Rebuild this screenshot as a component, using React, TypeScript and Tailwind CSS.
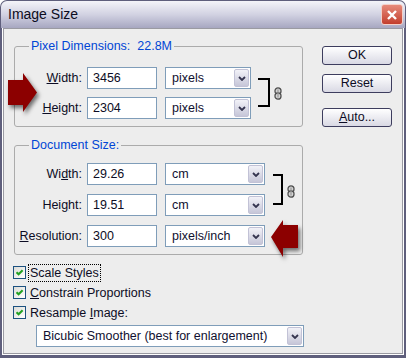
import React from "react";

const Chevron = () => (
  <svg width="8" height="5" viewBox="0 0 8 5">
    <path d="M1 1l3 3 3-3" stroke="#34344f" strokeWidth="1.8" fill="none" />
  </svg>
);

const Chain = () => (
  <svg width="8" height="13" viewBox="0 0 8 13">
    <rect x="1" y="0.8" width="6" height="6.4" rx="3" fill="#d4d4d4" stroke="#505050" strokeWidth="1.3" />
    <rect x="1" y="5.8" width="6" height="6.4" rx="3" fill="#d4d4d4" stroke="#505050" strokeWidth="1.3" />
    <path d="M4 2.5v8" stroke="#8a8a8a" strokeWidth="1" />
  </svg>
);

function Select({ value, className }: { value: string; className: string }) {
  return (
    <div className={`flex h-[22px] items-center border border-[#7f9db9] bg-white ${className}`}>
      <span className="flex-1 pl-[6px] text-[#101030]">{value}</span>
      <div className="m-[1px] flex h-[18px] w-[15px] items-center justify-center rounded-[2px] border border-[#c2c2d6] bg-gradient-to-b from-[#f2f2f8] to-[#c6c6d8]">
        <Chevron />
      </div>
    </div>
  );
}

function Field({ value }: { value: string }) {
  return (
    <div className="ml-[5px] flex h-[22px] w-[70px] items-center border border-[#7f9db9] bg-white pl-[5px]">
      {value}
    </div>
  );
}

function Row({ label, value, unit, selectClass }: { label: React.ReactNode; value: string; unit: string; selectClass: string }) {
  return (
    <div className="flex items-center">
      <div className="w-[67px] text-right">{label}</div>
      <Field value={value} />
      <Select value={unit} className={selectClass} />
    </div>
  );
}

function Check({ children, focus }: { children: React.ReactNode; focus?: boolean }) {
  return (
    <div className="flex h-[13px] items-center">
      <div className="flex h-[13px] w-[13px] items-center justify-center border border-[#1c5180] bg-gradient-to-br from-[#dcdcd7] to-white">
        <svg width="9" height="9" viewBox="0 0 9 9">
          <path d="M1.5 4.2L3.6 6.3 7.6 2.2" stroke="#21a121" strokeWidth="2" fill="none" />
        </svg>
      </div>
      <div className={`ml-[2px] px-[1px] leading-[16px] ${focus ? "border border-dotted border-black" : "border border-transparent"}`}>
        {children}
      </div>
    </div>
  );
}

export default function App() {
  return (
    <div className="relative flex h-[358px] w-[406px] flex-col overflow-hidden rounded-t-[7px] bg-[#5f5f7c] font-['Liberation_Sans',Arial,sans-serif] text-[12.5px] leading-[15px] text-[#0c0c24]">
      {/* title bar */}
      <div className="mx-[1px] mt-[1px] flex h-[27px] items-center justify-between rounded-t-[6px] bg-gradient-to-b from-[#f4f4f9] via-[#d2d2e2] to-[#a7a7c1] pl-[7px] pr-[2px]">
        <span className="text-[14px] text-[#0c0c20]">Image Size</span>
        <div className="flex h-[21px] w-[22px] items-center justify-center rounded-[3px] border border-[#f4d0c8] bg-gradient-to-b from-[#e6897a] to-[#c23d2c]">
          <svg width="12" height="12" viewBox="0 0 12 12">
            <path d="M2 2l8 8M10 2l-8 8" stroke="white" strokeWidth="2.4" />
          </svg>
        </div>
      </div>

      {/* frame */}
      <div className="flex flex-1 flex-col px-[2px] pb-[3px]">
        <div className="flex flex-1 flex-col border-x border-b border-white">
          <div className="flex flex-1 border border-[#9a9aa2] bg-[#ededed]">
            {/* left column */}
            <div className="ml-[10px] mt-[10px] flex w-[289px] flex-col">
              <fieldset className="rounded-[3px] border border-[#ababab]">
                <legend className="ml-[14px] px-[2px] text-[#0046d5]">Pixel Dimensions:&nbsp;&nbsp;22.8M</legend>
                <div className="flex pb-[7px] pt-[13px]">
                  <div className="flex flex-col gap-[8px]">
                    <Row label={<><u>W</u>idth:</>} value="3456" unit="pixels" selectClass="ml-[8px] w-[86px]" />
                    <Row label={<><u>H</u>eight:</>} value="2304" unit="pixels" selectClass="ml-[8px] w-[86px]" />
                  </div>
                  <div className="ml-[7px] mt-[11px] h-[29px] w-[12px] border-y-2 border-r-2 border-black" />
                  <div className="ml-[4px] mt-[20px]">
                    <Chain />
                  </div>
                </div>
              </fieldset>

              <fieldset className="mt-[11px] rounded-[3px] border border-[#ababab]">
                <legend className="ml-[14px] px-[2px] text-[#0046d5]">Document Size:</legend>
                <div className="flex flex-col gap-[9px] pb-[7px] pt-[10px]">
                  <div className="flex">
                    <div className="flex flex-col gap-[9px]">
                      <Row label={<>Wi<u>d</u>th:</>} value="29.26" unit="cm" selectClass="ml-[8px] w-[100px]" />
                      <Row label={<>Hei<u>g</u>ht:</>} value="19.51" unit="cm" selectClass="ml-[8px] w-[100px]" />
                    </div>
                    <div className="ml-[8px] mt-[11px] h-[31px] w-[10px] border-y-2 border-r-2 border-black" />
                    <div className="ml-[4px] mt-[22px]">
                      <Chain />
                    </div>
                  </div>
                  <Row label={<><u>R</u>esolution:</>} value="300" unit="pixels/inch" selectClass="ml-[8px] w-[100px]" />
                </div>
              </fieldset>

              <div className="-ml-[1px] mt-[11px] flex flex-col gap-[7px]">
                <Check focus>Scale Styles</Check>
                <Check>
                  <u>C</u>onstrain Proportions
                </Check>
                <Check>
                  Resample <u>I</u>mage:
                </Check>
              </div>

              <div className="ml-[22px] mt-[6px] flex h-[22px] w-[268px] items-center border border-[#7f9db9] bg-white">
                <span className="flex-1 pl-[6px] text-[#101030]">Bicubic Smoother (best for enlargement)</span>
                <div className="m-[1px] flex h-[18px] w-[15px] items-center justify-center rounded-[2px] border border-[#c2c2d6] bg-gradient-to-b from-[#f2f2f8] to-[#c6c6d8]">
                  <Chevron />
                </div>
              </div>
            </div>

            {/* buttons */}
            <div className="ml-[19px] mt-[17px] flex w-[70px] flex-col">
              <button className="h-[19px] w-[70px] rounded-[3px] border border-[#3d3d5e] bg-gradient-to-b from-white to-[#d9d9e4] leading-none">OK</button>
              <button className="mt-[9px] h-[19px] w-[70px] rounded-[3px] border border-[#3d3d5e] bg-gradient-to-b from-white to-[#d9d9e4] leading-none">Reset</button>
              <button className="mt-[15px] h-[19px] w-[70px] rounded-[3px] border border-[#3d3d5e] bg-gradient-to-b from-white to-[#d9d9e4] leading-none">
                <u>A</u>uto...
              </button>
            </div>
          </div>
        </div>
      </div>

      {/* red pointer arrows */}
      <svg className="absolute left-[6px] top-[70px] drop-shadow-[2px_3px_2px_rgba(0,0,0,0.55)]" width="40" height="48" viewBox="0 0 40 48">
        <polygon points="2,10 17,10 17,3 31,22.5 17,42 17,35 2,35" fill="#8c0000" />
      </svg>
      <svg className="absolute left-[268px] top-[216px] drop-shadow-[2px_3px_2px_rgba(0,0,0,0.55)]" width="40" height="48" viewBox="0 0 40 48">
        <polygon points="3,21 15,4 15,9 30,9 30,32 15,32 15,41" fill="#8c0000" />
      </svg>
    </div>
  );
}
